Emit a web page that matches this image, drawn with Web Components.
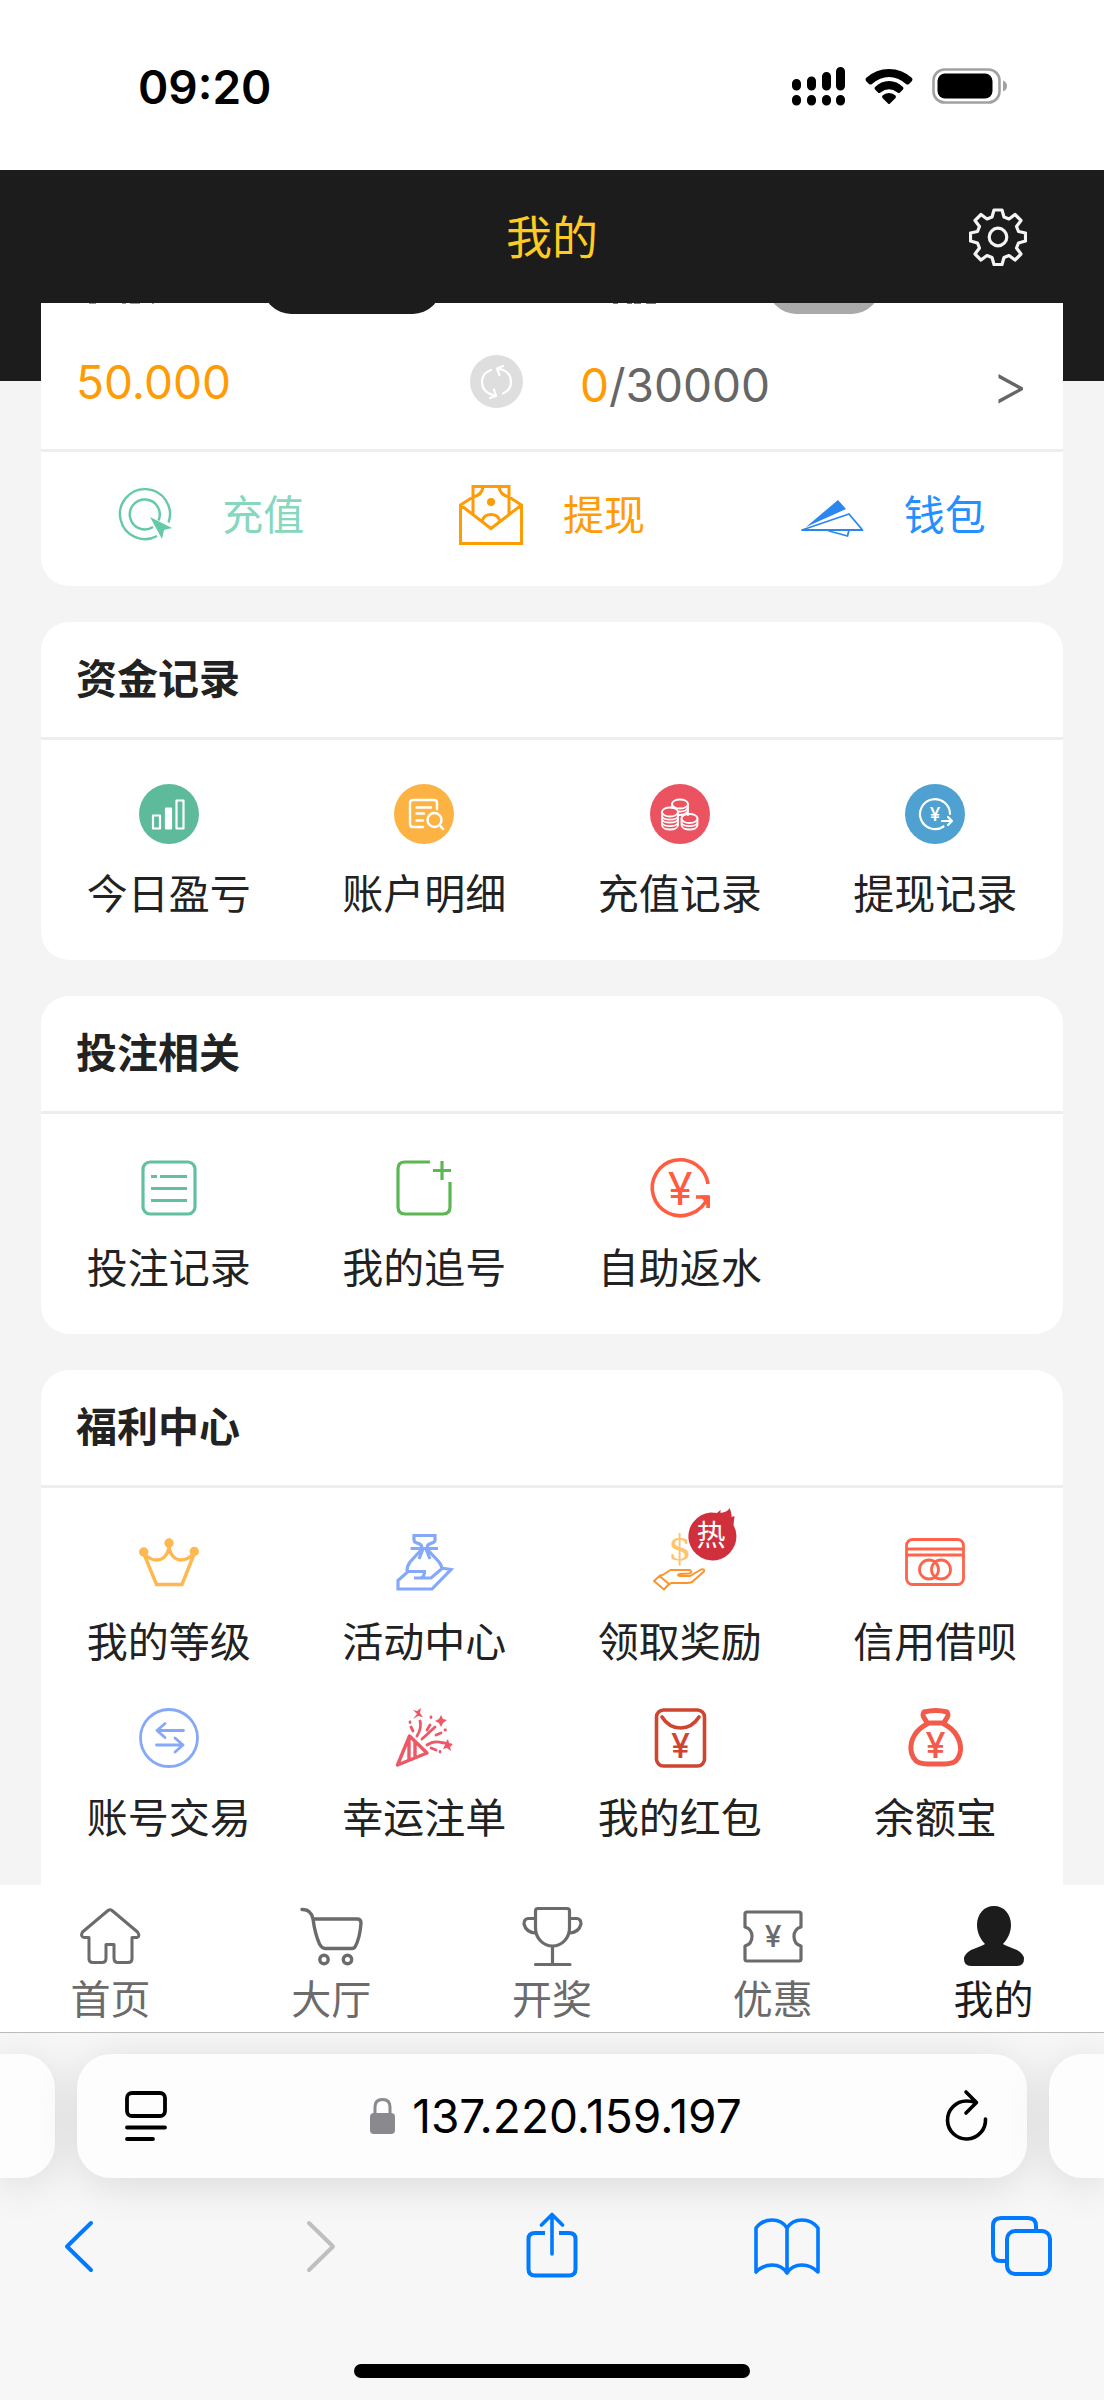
<!DOCTYPE html>
<html lang="zh-CN">
<head>
<meta charset="utf-8">
<meta name="viewport" content="width=device-width, initial-scale=1">
<title>我的</title>
<style>
  body { margin: 0; background: #f4f4f4; color: #222; font-family: "Inter", "Noto Sans CJK SC", sans-serif; }
  svg { display: block; overflow: visible; fill: none; stroke-linecap: round; stroke-linejoin: round; }
  svg text { stroke: none; text-anchor: middle; }
</style>
</head>
<body>
<app-screen>
  <status-bar slot="top"></status-bar>
  <page-header slot="top">我的</page-header>

  <balance-card></balance-card>

  <menu-card>
    <span slot="title">资金记录</span>
    <menu-item>
      <svg slot="icon" width="60" height="60" viewBox="0 0 60 60"><circle cx="30" cy="30" r="30" fill="#5dbb9b"/><g stroke="#fff" stroke-width="2.200"><rect x="14" y="31.500" width="7" height="13"/><rect x="27" y="24.500" width="5" height="20" fill="#fff"/><rect x="37.500" y="16.500" width="7" height="28"/></g></svg>
      今日盈亏
    </menu-item>
    <menu-item>
      <svg slot="icon" width="60" height="60" viewBox="0 0 60 60"><circle cx="30" cy="30" r="30" fill="#fcb344"/><g stroke="#fff" stroke-width="2.400"><path d="M43 25V19Q43 16 40 16H19Q16 16 16 19V40Q16 43 19 43H29M22.500 23.500H37M22.500 29.500H30M22.500 36.500H29"/><circle cx="40.500" cy="36" r="7"/><path d="M46 41.500L49 45"/></g></svg>
      账户明细
    </menu-item>
    <menu-item>
      <svg slot="icon" width="60" height="60" viewBox="0 0 60 60"><circle cx="30" cy="30" r="30" fill="#eb5361"/><g stroke="#fff" stroke-width="1.800"><ellipse cx="30" cy="20" rx="8" ry="4.500"/><path d="M38 20V31M22 20V24M38 23.500Q36 28 29 27.500M38 27Q36 31 29 31"/><ellipse cx="20" cy="28" rx="8" ry="4.500"/><path d="M12 28V41C12 47 28 47 28 41V28M12 31.500C12 37 28 37 28 31.500M12 34.500C12 40 28 40 28 34.500M12 38C12 43.500 28 43.500 28 38"/><ellipse cx="39.500" cy="34.500" rx="8" ry="4.500"/><path d="M31.500 34.500V41C31.500 47 47.500 47 47.500 41V34.500M31.500 38C31.500 43.500 47.500 43.500 47.500 38"/></g></svg>
      充值记录
    </menu-item>
    <menu-item>
      <svg slot="icon" width="60" height="60" viewBox="0 0 60 60"><circle cx="30" cy="30" r="30" fill="#4fa1d1"/><path stroke="#fff" stroke-width="2.200" d="M45 30A15 15 0 1 0 38.500 42.500M37 37H47M43 33L47 37L43 41"/><text x="30" y="37" font-size="19" font-weight="500" fill="#fff">¥</text></svg>
      提现记录
    </menu-item>
  </menu-card>

  <menu-card>
    <span slot="title">投注相关</span>
    <menu-item>
      <svg slot="icon" width="60" height="60" viewBox="0 0 60 60"><g stroke="#62c0a2" stroke-width="3.200" stroke-linecap="butt"><rect x="4" y="4" width="52" height="52" rx="7"/><path d="M12 18.500H18M21 18.500H48M12 30.500H48M12 42.500H48"/></g></svg>
      投注记录
    </menu-item>
    <menu-item>
      <svg slot="icon" width="60" height="60" viewBox="0 0 60 60"><path stroke="#5cb651" stroke-width="3.200" stroke-linecap="butt" d="M36 4H11Q4 4 4 11V49Q4 56 11 56H49Q56 56 56 49V24M39 12.500H57M48 3V22"/></svg>
      我的追号
    </menu-item>
    <menu-item>
      <svg slot="icon" width="60" height="60" viewBox="0 0 60 60"><path stroke="#ff5c40" stroke-width="3.600" stroke-linecap="butt" d="M58 26A28 28 0 1 0 40 56Q54 51 57.500 39M46 39H58V50"/><path fill="#ff5c40" d="M50 37.500H60V50L56 46Z"/><text x="30" y="47" font-size="45" fill="#ff5c40">¥</text></svg>
      自助返水
    </menu-item>
  </menu-card>

  <menu-card last>
    <span slot="title">福利中心</span>
    <menu-item>
      <svg slot="icon" width="60" height="60" viewBox="0 0 60 60"><path stroke="#ffb84f" stroke-width="3.400" stroke-linecap="butt" stroke-linejoin="miter" d="M5 22L17.500 52.500H43L55.500 21M6 23Q13 28.500 18 28C25 28 30 21 30 13C30 21 35 28 42 28Q48 28 55 22"/><g fill="#ffb84f"><circle cx="4.700" cy="20" r="4.700"/><circle cx="30" cy="11" r="4.700"/><circle cx="55.300" cy="19.500" r="4.700"/></g></svg>
      我的等级
    </menu-item>
    <menu-item>
      <svg slot="icon" width="60" height="60" viewBox="0 0 60 60"><path stroke="#85a9f8" stroke-width="3.200" stroke-linecap="butt" stroke-linejoin="miter" d="M28 16C28 9 20 13 20 8V3.500H41V8C41 13 33 9 33 16M16.500 16.500H44M28 17L16 30Q13 34 13 39M33 17L45 30Q48 34 48 37M29 17L25 27M32 17L36 27M20 46H37L48 36.500H51L57 37.500L38 57H4V48.500L14 39.500H30.500C30.500 43 29.500 45 27 46"/></svg>
      活动中心
    </menu-item>
    <menu-item>
      <svg slot="icon" width="60" height="60" viewBox="0 0 60 60"><text x="30" y="28" font-size="36" font-family="DejaVu Serif, serif" fill="#ffc46e">$</text><path stroke="#ff932b" stroke-width="2" d="M4 49L9.500 44L19 52L14 57.500ZM10 43.500L12.500 43L20.500 38H40Q43 40 39.500 41.500L30 42Q26 43 30 44H40L51 37.500Q55 36.500 54 39.500L42 50Q40 51 37 51H21L18.500 53"/></svg>
      <svg slot="badge" width="50" height="52" viewBox="0 0 50 52"><path fill="#cf303b" d="M24.500 4.500Q29 4.500 31 5L34.500 2V5Q42 4 43.500 0Q46 5 45.500 9L48.500 8L47.500 17A24 24 0 1 1 24.500 4.500Z"/><text x="25" y="38" font-size="29" fill="#fff">热</text></svg>
      领取奖励
    </menu-item>
    <menu-item>
      <svg slot="icon" width="60" height="60" viewBox="0 0 60 60"><g stroke="#ff644b" stroke-width="2.800"><rect x="1.500" y="7.500" width="57" height="45" rx="6"/><path stroke-linecap="butt" d="M1 17H59M1 23H59"/><circle cx="24" cy="37.500" r="9.500"/><circle cx="36" cy="37.500" r="9.500"/></g></svg>
      信用借呗
    </menu-item>
    <menu-item>
      <svg slot="icon" width="60" height="60" viewBox="0 0 60 60"><g stroke="#85a9f8" stroke-width="2.800"><circle cx="30" cy="30" r="28.500"/><path d="M44.500 22.500H18M26 15.500L18 22.500L26 29.500M17.500 37H44M36 30L44 37L36 44"/></g></svg>
      账号交易
    </menu-item>
    <menu-item>
      <svg slot="icon" width="60" height="60" viewBox="0 0 60 60"><g stroke="#ee5765" stroke-width="3.400"><path d="M15.500 28L33 45L3.500 57ZM15 30V51M21 35V48"/><path stroke-width="2.800" d="M26 13Q28 20 23 28M41 19L28 31M33 37Q40 32 49 35M17 19L19 23M36 17L33 22M42 27L47 25M37 40L42 42M16 14V14.500M37 9V9.500M51 22H51.500M46 43.500V44"/></g><path fill="#ee5765" d="M23 6l-4-4 4 1 4-3-1 5 3 4-5-1-5 3ZM47 7l2 4 4 1-4 3-2 4-2-4-4-2 4-2ZM54 31l1 4 4 1-3 3 1 4-4-3-4 1 2-4-3-4 4 1Z"/></svg>
      幸运注单
    </menu-item>
    <menu-item>
      <svg slot="icon" width="60" height="60" viewBox="0 0 60 60"><g stroke="#d0452f" stroke-width="3.600"><rect x="6.500" y="2" width="48" height="56" rx="7"/><path d="M12 9Q19 20 30.500 20Q42 20 49 9"/></g><text x="30.500" y="50" font-size="34" font-weight="500" fill="#d0452f">¥</text></svg>
      我的红包
    </menu-item>
    <menu-item>
      <svg slot="icon" width="60" height="60" viewBox="0 0 60 60"><path stroke="#f25a49" stroke-width="5" d="M22 15C20 10 16 8 19 4Q31 1 42 4C45 8 41 10 39 15ZM22 16C10 22 5 33 6 42C8 58 20 56 31 56C42 56 54 58 55.500 42C56 33 51 22 39 16"/><text x="30.500" y="50" font-size="36" font-weight="500" fill="#f25a49">¥</text></svg>
      余额宝
    </menu-item>
  </menu-card>

  <tab-bar slot="bottom">
    <tab-item>
      <svg slot="icon" width="60" height="60" viewBox="0 0 60 60"><path stroke="#6b6b6b" stroke-width="3" d="M28 4.500Q30 3 32 4.500L57.500 26Q60.500 30.500 57 31.500H52V53Q52 56.500 48 56.500H38Q34 56.500 34 52V38.500H26V52Q26 56.500 22 56.500H13Q9 56.500 9 53V31.500H4Q0 30.500 2.500 26Z"/></svg>
      首页
    </tab-item>
    <tab-item>
      <svg slot="icon" width="60" height="60" viewBox="0 0 60 60"><g stroke="#6b6b6b" stroke-width="3.400"><path d="M1 3.500Q10 3 12 13H56Q60 13 60 17Q59 32 54 41Q53 42.500 51 42.500H24Q21 42.500 18.500 38Q14 28 12 13"/><circle cx="23" cy="53.500" r="4.200"/><circle cx="46.500" cy="53.500" r="4.200"/></g></svg>
      大厅
    </tab-item>
    <tab-item>
      <svg slot="icon" width="60" height="60" viewBox="0 0 60 60"><path stroke="#6b6b6b" stroke-width="3.200" d="M16 2.500H45Q47.500 2.500 47.500 5V22C47.500 32 40 40 30.500 40C21 40 13.500 32 13.500 22V5Q13.500 2.500 16 2.500ZM13 12.500H6Q2 13 2 18Q4 26 13 27M48 12.500H55Q59 13 59 18Q57 26 48 27M30.500 40V58M13.500 58.500H48"/></svg>
      开奖
    </tab-item>
    <tab-item>
      <svg slot="icon" width="60" height="60" viewBox="0 0 60 60"><path stroke="#6b6b6b" stroke-width="3.200" d="M4 6H56Q58 6 58 8V21Q51 23 51 30.500Q51 38 58 40V53Q58 55 56 55H4Q2 55 2 53V40Q9 38 9 30.500Q9 23 2 21V8Q2 6 4 6Z"/><text x="30" y="41" font-size="30" font-weight="500" fill="#6b6b6b">¥</text></svg>
      优惠
    </tab-item>
    <tab-item current>
      <svg slot="icon" width="60" height="60" viewBox="0 0 60 60"><path fill="#1c1c1c" d="M30 0C40 0 47 8 47 19C47 27 43 34 39 38Q40 39 53 44Q60 48 60 53Q60 60 53 60H7Q0 60 0 53Q0 48 7 44Q20 39 21 38C17 34 13 27 13 19C13 8 20 0 30 0Z"/></svg>
      我的
    </tab-item>
  </tab-bar>
  <browser-chrome slot="bottom">137.220.159.197</browser-chrome>
</app-screen>

<script>
const base = `
  :host, *, *::before { box-sizing: border-box; }
  button { margin: 0; padding: 0; border: 0; background: none; color: inherit; font: inherit; display: block; cursor: pointer; }
  a { color: inherit; text-decoration: none; }
  svg { display: block; fill: none; stroke-linecap: round; stroke-linejoin: round; }
`;
function element(name, css, html) {
  const template = document.createElement('template');
  template.innerHTML = `<style>${base}${css}</style>${html}`;
  customElements.define(name, class extends HTMLElement {
    constructor() {
      super();
      this.attachShadow({ mode: 'open' }).append(template.content.cloneNode(true));
    }
  });
}

element('app-screen', `
  :host { display: flex; flex-direction: column; min-height: 100vh; }
  main { flex: 1; display: flex; flex-direction: column; gap: 36px; padding: 0 41px; background: linear-gradient(#1c1c1c 0 78px, #f4f4f4 78px); }
`, `<slot name="top"></slot><main><slot></slot></main><slot name="bottom"></slot>`);

element('status-bar', `
  :host { display: flex; justify-content: space-between; align-items: center; height: 170px; padding: 4px 93px 0 138px; background: #fff; color: #000; }
  time { font-size: 46px; line-height: 60px; font-weight: 600; }
`, `<time>09:20</time>
  <svg width="220" height="44" viewBox="0 0 220 44" role="img" aria-label="信号、无线网络、电池">
    <path stroke="#000" stroke-width="9" d="M5.500 18.500V21M20.500 16V21M35.500 11.500V21M49.500 6.500V21M5.500 34.500V36M20.500 34.500V36M35.500 34.500V36M49.500 34.500V36"/>
    <path fill="#000" d="M98 4Q111 4 121 13Q122 14.500 121 16L118 19Q116.500 20 115 19Q107 12 98 12Q89 12 81 19Q79.500 20 78 19L75 16Q74 14.500 75 13Q85 4 98 4ZM98 16Q106 16 112 22Q113 23 112 24.500L109 27.500Q108 28.500 106.500 27.500Q98 21 89.500 27.500Q88 28.500 87 27.500L84 24.500Q83 23 84 22Q90 16 98 16ZM98 28Q102 28 104.500 30.500Q105.500 31.500 104.500 33L99 38.500Q98 39.500 97 38.500L91.500 33Q90.500 31.500 91.500 30.500Q94 28 98 28Z"/>
    <rect x="142.500" y="4.500" width="66" height="33" rx="11" stroke="#a1a1a1" stroke-width="2.600"/>
    <rect x="146.500" y="8.500" width="55" height="25" rx="7.500" fill="#000"/>
    <path fill="#a1a1a1" d="M212 15.500Q216 17 216 21Q216 25 212 26.500Z"/>
  </svg>`);

element('page-header', `
  :host { display: grid; grid-template-columns: 1fr auto 1fr; align-items: center; height: 133px; padding: 0 77px; background: #1c1c1c; color: #ffcb22; }
  h1 { grid-column: 2; margin: 0; font-size: 46px; line-height: 64px; font-weight: 400; }
  button { justify-self: end; }
`, `<h1><slot></slot></h1>
  <button aria-label="设置"><svg width="58" height="58" viewBox="0 0 58 58" stroke="#f4f4f4" stroke-width="3.200">
    <circle cx="29" cy="29" r="8.800"/>
    <path d="M25 2H33L35 9L40 11L46 6.500L52 12.500L47.500 18.500L49.500 23.500L56.500 25V33L49.500 35L47.500 40L52 46L46 52L40 47.500L35 49.500L33 56.500H25L23 49.500L18 47.500L12 52L6 46L10.500 40L8.500 35L1.500 33V25L8.500 23.500L10.500 18.500L6 12.500L12 6.500L18 11L23 9Z"/></svg></button>`);

element('balance-card', `
  :host { display: block; background: #fff; border-radius: 0 0 28px 28px; }
  .balances { display: grid; grid-template-columns: 1fr 1fr; border-bottom: 3px solid #eee; }
  .edge { height: 11px; display: flex; overflow: hidden; align-items: flex-end; padding: 0 35px; gap: 106px; }
  .edge svg { align-self: flex-start; }
  .pill { height: 60px; width: 178px; flex: none; border-radius: 28px; background: #1c1c1c; }
  .right .pill { width: 112px; background: #aaa; }
  .value { display: flex; justify-content: space-between; align-items: center; height: 135px; padding: 0 29px 0 35px; color: #ff9b05; font-size: 46px; line-height: 60px; }
  .right .value { padding: 6px 35px 0 28px; }
  .more, .total { color: #666; }
  .more { font-size: 56px; font-weight: 300; }
  .actions { display: grid; grid-template-columns: repeat(3, 1fr); height: 134px; padding-bottom: 8px; }
  .actions a { display: flex; align-items: center; justify-content: center; gap: 40px; font-size: 41px; line-height: 60px; }
  .deposit { color: #86d7bb; } .withdraw { color: #ff9b05; } .wallet { color: #2490ff; }
`, `<div class="balances">
    <div class="left">
      <div class="edge"><svg width="81" height="2" viewBox="0 0 81 2" aria-hidden="true"><path stroke="#999" stroke-width="1" stroke-linecap="butt" d="M13 .5H20M46 .5H50M54 .5H64M76 .5H78"/></svg><span class="pill"></span></div>
      <div class="value"><span>50.000</span>
        <button aria-label="刷新余额"><svg width="53" height="53" viewBox="0 0 53 53"><circle cx="26.500" cy="26.500" r="26.500" fill="#dedede"/><path stroke="#fff" stroke-width="2.200" d="M21 15Q12 18 12 27Q12 37 24 40.500M20 43L26 41L24 34.500M33 38.500Q41 35 41 27Q41 16 28 13.500M33 11L27 13.500L29.500 20"/></svg></button>
      </div>
    </div>
    <div class="right">
      <div class="edge"><svg width="75" height="2" viewBox="-9 0 75 2" aria-hidden="true"><path stroke="#777" stroke-width="1" stroke-linecap="butt" d="M17 .5H22M31 .5H36M38 .5H45M50 .5H60"/></svg><span class="pill"></span></div>
      <div class="value"><span>0<span class="total">/30000</span></span><button class="more" aria-label="查看详情">&gt;</button></div>
    </div>
  </div>
  <nav class="actions">
    <a class="deposit" href="#deposit"><svg width="64" height="60" viewBox="0 0 64 60"><path stroke="#64c9a9" stroke-width="2.400" stroke-linecap="butt" d="M39 51A25 25 0 1 1 50.500 37.500M35 42A15 15 0 1 1 40.500 35.500"/><path fill="#64c9a9" d="M32 32L54 43L46 45L44 54Z"/></svg>充值</a>
    <a class="withdraw" href="#withdraw"><svg width="64" height="60" viewBox="0 0 64 60"><g stroke="#ff9b05" stroke-width="3" stroke-linejoin="miter" stroke-linecap="butt"><path d="M14 30V1.500H50V30M14 12L1.500 20V58.500H62.500V20L50 12M1.500 20L32 43.500L62.500 20M14 12Q23 10 24 2M50 12Q41 10 40 2M23 36A9.500 9.500 0 0 1 41 36"/></g><circle cx="32" cy="17" r="4" fill="#ff9b05"/></svg>提现</a>
    <a class="wallet" href="#wallet"><svg width="64" height="60" viewBox="0 0 64 60"><path fill="#2a87ef" d="M38 15L46 24L6 42Z"/><path stroke="#2a87ef" stroke-width="1.800" d="M2 45L49 29L62.500 45ZM29 46L47.500 51L49 45"/></svg>钱包</a>
  </nav>`);

element('menu-card', `
  :host { display: block; background: #fff; border-radius: 28px; }
  :host([last]) { flex: 1; border-radius: 28px 28px 0 0; }
  h2 { margin: 0; padding: 27px 35px 28px; border-bottom: 3px solid #eee; font-size: 41px; line-height: 60px; font-weight: 700; }
  .items { display: grid; grid-template-columns: repeat(4, 1fr); padding: 22px 0; }
`, `<h2><slot name="title"></slot></h2><div class="items"><slot></slot></div>`);

element('menu-item', `
  :host { display: block; }
  a { display: flex; flex-direction: column; align-items: center; gap: 20px; padding: 22px 0 14px; }
  .icon { position: relative; }
  .badge { position: absolute; left: 36px; top: -24px; }
  .label { font-size: 41px; line-height: 60px; }
`, `<a href="#item"><span class="icon"><slot name="icon"></slot><span class="badge"><slot name="badge"></slot></span></span><span class="label"><slot></slot></span></a>`);

element('tab-bar', `
  :host { display: block; background: #fff; border-bottom: 1px solid #bbb; }
  nav { display: grid; grid-template-columns: repeat(5, 1fr); }
`, `<nav><slot></slot></nav>`);

element('tab-item', `
  :host { display: block; color: #6b6b6b; }
  :host([current]) { color: #1c1c1c; }
  a { display: flex; flex-direction: column; align-items: center; gap: 4px; padding: 21px 0 2px; font-size: 40px; line-height: 60px; }
`, `<a href="#tab"><slot name="icon"></slot><span><slot></slot></span></a>`);

element('browser-chrome', `
  :host { display: block; overflow: hidden; background: #f7f7f7; color: #000; }
  .tabs { display: grid; grid-template-columns: 55px 1fr 55px; gap: 22px; padding-top: 21px; }
  .tab { height: 124px; border-radius: 34px; background: #fdfdfd; box-shadow: 0 6px 44px rgba(0, 0, 0, .12); }
  .prev { border-radius: 0 34px 34px 0; }
  .next { border-radius: 34px 0 0 34px; }
  .current { display: flex; align-items: center; justify-content: space-between; padding: 0 38px 0 46px; }
  .address { display: flex; align-items: center; gap: 16px; font-size: 46px; line-height: 60px; }
  .tools { display: flex; justify-content: space-between; padding: 34px 50px 0; color: #007aff; }
  .tools svg { stroke: currentColor; stroke-width: 4; }
  .tools button:disabled { color: #bfbfbf; }
  .home { width: 396px; height: 14px; margin: 86px auto 22px; border-radius: 7px; background: #000; }
`, `<div class="tabs">
    <div class="tab prev"></div>
    <div class="tab current">
      <button aria-label="页面菜单"><svg width="46" height="52" viewBox="0 0 46 52" stroke="#000" stroke-width="3.800"><rect x="4" y="3" width="38" height="23" rx="5"/><path d="M4 37.500H42M4 49H30"/></svg></button>
      <button class="address"><svg width="26" height="38" viewBox="0 0 26 38"><rect x="0" y="16" width="25" height="21" rx="4" fill="#8a898e"/><path stroke="#8a898e" stroke-width="3" d="M5 17V10Q5 2.500 12.500 2.500Q20 2.500 20 10V17"/></svg><slot></slot></button>
      <button aria-label="重新载入"><svg width="46" height="54" viewBox="0 0 46 54" stroke="#000" stroke-width="3.600"><path d="M42.500 30A19 19 0 1 1 23.500 12Q28 12 33 13.500M23 3L33.500 13.500L23 24"/></svg></button>
    </div>
    <div class="tab next"></div>
  </div>
  <div class="tools">
    <button aria-label="后退"><svg width="66" height="66" viewBox="0 0 66 66"><path d="M41 11L17 34.500L41 58"/></svg></button>
    <button aria-label="前进" disabled><svg width="66" height="66" viewBox="0 0 66 66"><path d="M24 11L48 34.500L24 58"/></svg></button>
    <button aria-label="分享"><svg width="66" height="66" viewBox="0 0 66 66"><path stroke-linecap="butt" d="M26 21H16Q9.500 21 9.500 27V57Q9.500 63.500 16 63.500H50Q56.500 63.500 56.500 57V27Q56.500 21 50 21H40"/><path stroke-width="3.600" d="M33 42V3M22.500 13L33 2.500L43.500 13"/></svg></button>
    <button aria-label="书签"><svg width="66" height="66" viewBox="0 0 66 66"><path stroke-width="3.600" d="M33 61Q28 53 18 53Q9 53 2 60V16Q8 8 18 8Q28 8 33 16Q38 8 48 8Q58 8 64 16V60Q57 53 48 53Q38 53 33 61ZM33 16V60"/></svg></button>
    <button aria-label="标签页"><svg width="66" height="66" viewBox="0 0 66 66"><rect x="19" y="19" width="43" height="43" rx="8"/><path stroke-linecap="butt" d="M18 49H13Q5 49 5 41V14Q5 6 13 6H40Q48 6 48 14V18"/></svg></button>
  </div>
  <div class="home"></div>`);
</script>
</body>
</html>
